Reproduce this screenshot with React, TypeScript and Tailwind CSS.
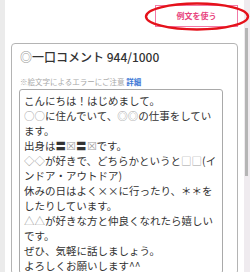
const lines = [
  "こんにちは！はじめまして。",
  "○○に住んでいて、◎◎の仕事をしてい",
  "ます。",
  "出身は〓☒〓☒です。",
  "◇◇が好きで、どちらかというと□□(イ",
  "ンドア・アウトドア)",
  "休みの日はよく××に行ったり、＊＊を",
  "したりしています。",
  "△△が好きな方と仲良くなれたら嬉しい",
  "です。",
  "ぜひ、気軽に話しましょう。",
  "よろしくお願いします^^",
];

const grey = "○◎□◇△☒";

function Line({ text }: { text: string }) {
  return (
    <div className="whitespace-nowrap">
      {Array.from(text).map((c, i) =>
        grey.includes(c) ? (
          <span key={i} className="text-[#a0a0a0]">
            {c}
          </span>
        ) : (
          c
        ),
      )}
    </div>
  );
}

export default function App() {
  return (
    <div
      className="flex h-[272px] w-[250px] overflow-hidden bg-[#ebebeb]"
      style={{ fontFamily: '"Noto Sans CJK JP", "Noto Sans", sans-serif' }}
    >
      <div className="w-[5px] shrink-0" />
      <div className="relative flex-1 bg-white px-[6px] pt-[5px]">
        <div className="flex justify-end">
          <button className="flex h-[22px] w-[83px] items-center justify-center border border-[#f27aa8] bg-white text-[8px] font-bold text-[#e8457e]">
            例文を使う
          </button>
        </div>
        <svg
          className="pointer-events-none absolute left-[139px] top-[2px] z-10"
          width="106"
          height="30"
          viewBox="0 0 106 30"
        >
          <ellipse cx="53" cy="14.5" rx="51" ry="13" fill="none" stroke="#e5121b" strokeWidth="2.4" />
        </svg>
        <div className="mt-[16px] rounded-[4px] border border-[#b4b4b4] pl-[7px] pr-[14px] pt-[5px]">
          <div className="pl-[1px] text-[12px] leading-[16px] font-medium text-[#333]">
            <span className="font-bold text-[#999]">◎</span>一口コメント 944/1000
          </div>
          <div className="mt-[12px] pl-[1px] text-[7.5px] leading-[10px] text-[#a8a8a8]">
            ※絵文字によるエラーにご注意 <span className="font-bold text-[#3b78d6]">詳細</span>
          </div>
          <div className="mt-[2px] rounded-[3px] border border-[#a9a9a9] px-[4px] pt-[3px] text-[10.5px] leading-[15px] text-[#333]">
            {lines.map((l, i) => (
              <Line key={i} text={l} />
            ))}
          </div>
        </div>
      </div>
      <div className="w-[6px] shrink-0 bg-[#efebef] pl-[1px] pt-[28px]">
        <div className="h-[148px] w-[3px] bg-[#b5b5b5]" />
      </div>
    </div>
  );
}
